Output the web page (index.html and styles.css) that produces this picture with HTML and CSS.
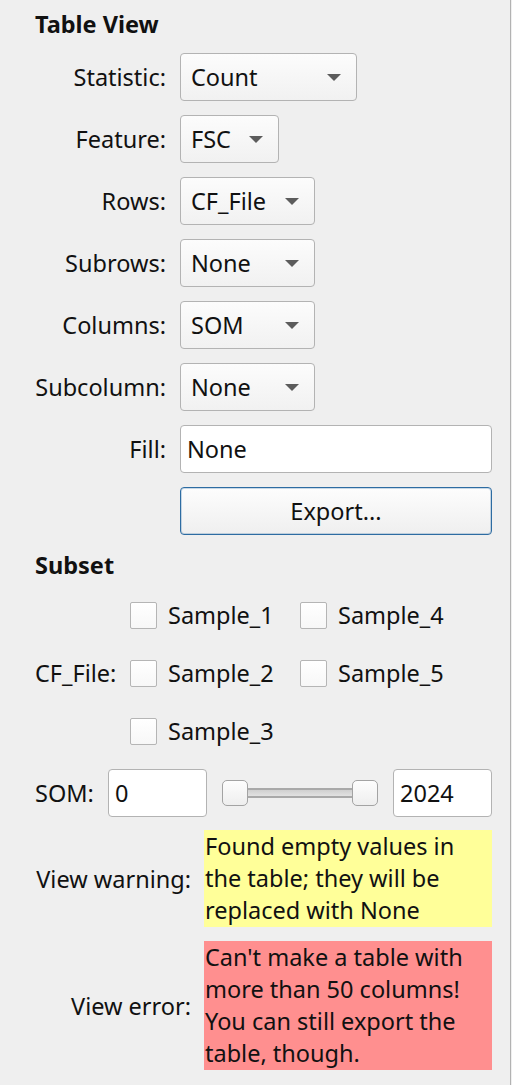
FILE: index.html
```html
<!DOCTYPE html>
<html>
<head>
<meta charset="utf-8">
<link rel="stylesheet" href="styles.css">
</head>
<body>
<div class="panel">
  <div class="group-title">Table View</div>
  <div class="form">
    <label class="form-label">Statistic:</label>
    <div class="combo combo-stat"><span>Count</span><svg class="arrow" width="14" height="7" viewBox="0 0 14 7"><polygon points="0,0 14,0 7,7" /></svg></div>

    <label class="form-label">Feature:</label>
    <div class="combo combo-feat"><span>FSC</span><svg class="arrow" width="14" height="7" viewBox="0 0 14 7"><polygon points="0,0 14,0 7,7" /></svg></div>

    <label class="form-label">Rows:</label>
    <div class="combo combo-mid"><span>CF_File</span><svg class="arrow" width="14" height="7" viewBox="0 0 14 7"><polygon points="0,0 14,0 7,7" /></svg></div>

    <label class="form-label">Subrows:</label>
    <div class="combo combo-mid"><span>None</span><svg class="arrow" width="14" height="7" viewBox="0 0 14 7"><polygon points="0,0 14,0 7,7" /></svg></div>

    <label class="form-label">Columns:</label>
    <div class="combo combo-mid"><span>SOM</span><svg class="arrow" width="14" height="7" viewBox="0 0 14 7"><polygon points="0,0 14,0 7,7" /></svg></div>

    <label class="form-label">Subcolumn:</label>
    <div class="combo combo-mid"><span>None</span><svg class="arrow" width="14" height="7" viewBox="0 0 14 7"><polygon points="0,0 14,0 7,7" /></svg></div>

    <label class="form-label">Fill:</label>
    <div class="line-edit">None</div>

    <div class="spacer"></div>
    <div class="button">Export...</div>
  </div>

  <div class="group-title subset-title">Subset</div>

  <div class="cf-row">
    <div class="cf-label">CF_File:</div>
    <div class="check-grid">
      <div class="check"><span class="box"></span><span>Sample_1</span></div>
      <div class="check"><span class="box"></span><span>Sample_2</span></div>
      <div class="check"><span class="box"></span><span>Sample_3</span></div>
      <div class="check"><span class="box"></span><span>Sample_4</span></div>
      <div class="check"><span class="box"></span><span>Sample_5</span></div>
    </div>
  </div>

  <div class="som-row">
    <div class="som-label">SOM:</div>
    <div class="line-edit num">0</div>
    <div class="slider">
      <div class="groove"></div>
      <div class="handle"></div>
      <div class="handle"></div>
    </div>
    <div class="line-edit num">2024</div>
  </div>

  <div class="msg-grid">
    <div class="msg-label">View warning:</div>
    <div class="msg warning">Found empty values in the table; they will be replaced with None</div>
    <div class="msg-label">View error:</div>
    <div class="msg error">Can't make a table with more than 50 columns! You can still export the table, though.</div>
  </div>
</div>
</body>
</html>
```
FILE: styles.css
```css
html, body {
  margin: 0;
  padding: 0;
  background: #efefef;
}

body {
  font-family: "Noto Sans", "Open Sans", sans-serif;
  font-size: 23.5px;
  line-height: 30px;
  color: #111;
}

.panel {
  box-sizing: border-box;
  width: 511px;
  height: 1085px;
  border-right: 1px solid #b2b2b2;
  padding: 9px 18px 0 35px;
}

.group-title {
  font-weight: 700;
  height: 30px;
}

.form {
  margin-top: 14px;
  display: grid;
  grid-template-columns: 131px 1fr;
  column-gap: 14px;
  row-gap: 14px;
  align-items: center;
}

.form-label {
  text-align: right;
  white-space: nowrap;
}

.combo {
  box-sizing: border-box;
  height: 48px;
  display: flex;
  align-items: center;
  justify-content: space-between;
  padding: 0 15px 0 10px;
  border: 1px solid #b3b3b3;
  border-radius: 4px;
  background: linear-gradient(#fcfcfc, #f1f1f1);
}

.combo-stat { width: 177px; }
.combo-feat { width: 99px; }
.combo-mid { width: 135px; }

.arrow {
  fill: #5c5c5c;
  flex: none;
}

.line-edit {
  box-sizing: border-box;
  height: 48px;
  display: flex;
  align-items: center;
  padding: 0 6px;
  border: 1px solid #b3b3b3;
  border-radius: 4px;
  background: #fff;
}

.button {
  box-sizing: border-box;
  height: 48px;
  display: flex;
  align-items: center;
  justify-content: center;
  border: 1px solid #2d6ca2;
  box-shadow: inset 0 0 0 1px rgba(45, 108, 162, 0.25);
  border-radius: 4px;
  background: linear-gradient(#fdfdfd, #efefef);
}

.subset-title {
  margin-top: 15px;
}

.cf-row {
  margin-top: 13px;
  display: flex;
  align-items: center;
}

.cf-label {
  width: 95px;
  flex: none;
  white-space: nowrap;
}

.check-grid {
  display: grid;
  grid-template-columns: 170px auto;
  grid-template-rows: repeat(3, 44px);
  grid-auto-flow: column;
  row-gap: 14px;
}

.check {
  display: flex;
  align-items: center;
  gap: 11px;
}

.box {
  box-sizing: border-box;
  width: 27px;
  height: 27px;
  border: 1px solid #b5b5b5;
  border-radius: 2px;
  background: linear-gradient(#fff, #f7f7f7);
  flex: none;
}

.som-row {
  margin-top: 16px;
  display: flex;
  align-items: center;
  gap: 15px;
}

.som-label {
  width: 58px;
  flex: none;
}

.num {
  width: 99px;
  flex: none;
}

.slider {
  flex: 1;
  height: 26px;
  display: flex;
  align-items: center;
  justify-content: space-between;
  position: relative;
}

.groove {
  position: absolute;
  left: 10px;
  right: 10px;
  top: 8px;
  height: 10px;
  box-sizing: border-box;
  border-top: 2px solid #a9a9a9;
  border-bottom: 2px solid #a9a9a9;
  background: linear-gradient(#d0d0d0, #e2e2e2);
}

.handle {
  position: relative;
  box-sizing: border-box;
  width: 26px;
  height: 26px;
  border: 1px solid #a3a3a3;
  border-radius: 5px;
  background: linear-gradient(#fdfdfd, #eeeeee);
}

.msg-grid {
  margin-top: 13px;
  display: grid;
  grid-template-columns: 156px 1fr;
  column-gap: 13px;
  row-gap: 14px;
  align-items: center;
}

.msg-label {
  text-align: right;
  white-space: nowrap;
}

.msg {
  line-height: 32px;
  padding-bottom: 1px;
  padding-left: 1px;
}

.warning { background: #ffff99; }
.error { background: #ff8f8f; }

.spacer { height: 1px; }
```
